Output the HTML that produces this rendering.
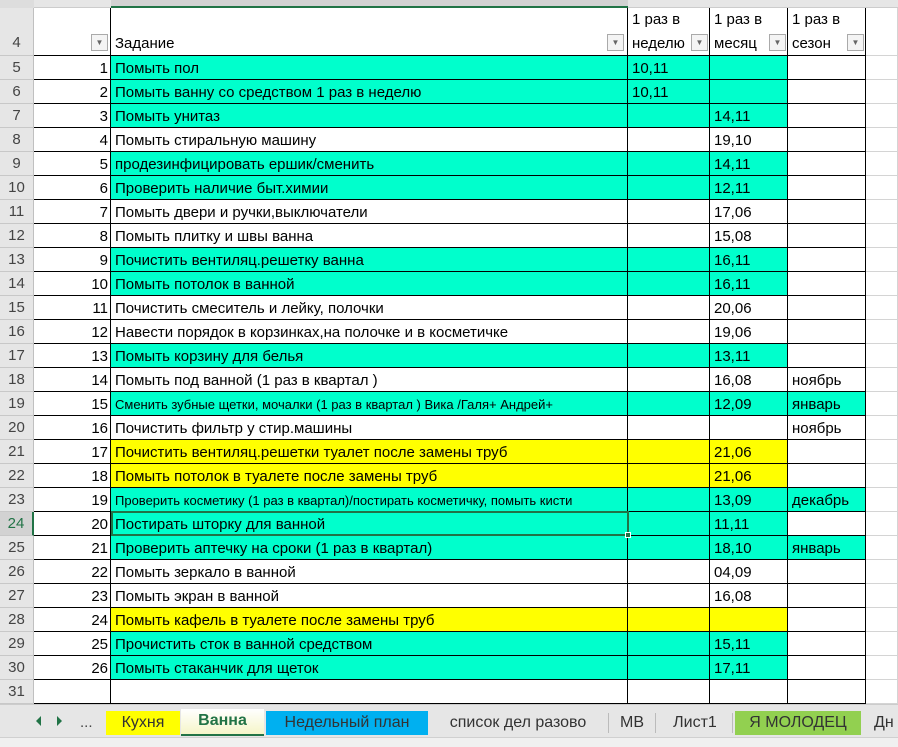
<!DOCTYPE html>
<html><head><meta charset="utf-8"><style>
*{margin:0;padding:0;box-sizing:border-box}
body{width:898px;height:747px;overflow:hidden;background:#fff;font-family:"Liberation Sans","DejaVu Sans",sans-serif;position:relative}
.a{position:absolute}
.rh{position:absolute;left:0;width:34px;background:#e6e6e6;color:#444;font-size:15px;text-align:center;border-bottom:1px solid #c8c8c8;border-right:1px solid #c0c0c0;white-space:nowrap;overflow:hidden}
.c{position:absolute;border-right:1px solid #000;border-bottom:1px solid #000;font-size:15px;color:#000;white-space:nowrap;overflow:hidden;line-height:25px;padding:0 4px}
.g{position:absolute;border-right:1px solid #d4d4d4;border-bottom:1px solid #d4d4d4}
.t{background:#00ffcc}.y{background:#ffff00}
.dd{position:absolute;width:17px;height:17px;border:1px solid #aaa;background:#f4f4f4;font-size:8px;color:#666;text-align:center;line-height:16px}
.tab{position:absolute;top:711px;height:24px;font-size:16px;line-height:24px;text-align:center;color:#333}
.sep{position:absolute;top:713px;width:1px;height:20px;background:#bbb}
</style></head><body>
<div class="a" style="left:0;top:0;width:898px;height:8px;background:#e6e6e6;border-bottom:1px solid #ccc"></div>
<div class="a" style="left:111px;top:0;width:517px;height:8px;background:#d2d2d2;border-bottom:2px solid #217346"></div>
<div class="a" style="left:0;top:0;width:34px;height:8px;background:#ddd"></div>
<div class="rh" style="top:8px;height:48px;line-height:70px">4</div>
<div class="c" style="left:34px;top:8px;width:77px;height:48px"></div>
<div class="dd" style="left:91px;top:34px">▼</div>
<div class="c" style="left:111px;top:8px;width:517px;height:48px;line-height:72px">Задание</div>
<div class="dd" style="left:607px;top:34px">▼</div>
<div class="c" style="left:628px;top:8px;width:82px;height:48px;line-height:24px">1 раз в<br>неделю</div>
<div class="dd" style="left:691px;top:34px">▼</div>
<div class="c" style="left:710px;top:8px;width:78px;height:48px;line-height:24px">1 раз в<br>месяц</div>
<div class="dd" style="left:769px;top:34px">▼</div>
<div class="c" style="left:788px;top:8px;width:78px;height:48px;line-height:24px">1 раз в<br>сезон</div>
<div class="dd" style="left:847px;top:34px">▼</div>
<div class="g" style="left:866px;top:8px;width:32px;height:48px"></div>
<div id="rows"></div>
<script>
(function(){
var d=[
[1,"Помыть пол","t","10,11","","",""],
[2,"Помыть ванну со средством 1 раз в неделю","t","10,11","","",""],
[3,"Помыть унитаз","t","","14,11","",""],
[4,"Помыть стиральную машину","","","19,10","",""],
[5,"продезинфицировать ершик/сменить","t","","14,11","",""],
[6,"Проверить наличие быт.химии","t","","12,11","",""],
[7,"Помыть двери и ручки,выключатели","","","17,06","",""],
[8,"Помыть плитку и швы ванна","","","15,08","",""],
[9,"Почистить вентиляц.решетку ванна","t","","16,11","",""],
[10,"Помыть потолок в ванной","t","","16,11","",""],
[11,"Почистить смеситель и лейку, полочки","","","20,06","",""],
[12,"Навести порядок в корзинках,на полочке и в косметичке","","","19,06","",""],
[13,"Помыть корзину для белья","t","","13,11","",""],
[14,"Помыть под ванной (1 раз в квартал )","","","16,08","ноябрь",""],
[15,"Сменить зубные щетки, мочалки (1 раз в квартал ) Вика /Галя+ Андрей+","t","","12,09","январь","t",1],
[16,"Почистить фильтр у стир.машины","","","","ноябрь",""],
[17,"Почистить вентиляц.решетки туалет после замены труб","y","","21,06","",""],
[18,"Помыть потолок в туалете после замены труб","y","","21,06","",""],
[19,"Проверить косметику (1 раз в квартал)/постирать косметичку, помыть кисти","t","","13,09","декабрь","t",1],
[20,"Постирать шторку для ванной","t","","11,11","",""],
[21,"Проверить аптечку на сроки (1 раз в квартал)","t","","18,10","январь","t"],
[22,"Помыть зеркало в ванной","","","04,09","",""],
[23,"Помыть экран в ванной","","","16,08","",""],
[24,"Помыть кафель в туалете после замены труб","y","","","",""],
[25,"Прочистить сток в ванной средством","t","","15,11","",""],
[26,"Помыть стаканчик для щеток","t","","17,11","",""]];
var h="";
for(var i=0;i<27;i++){
 var yy=56+i*24,r=d[i];
 var sel=(i==19);
 h+='<div class="rh" style="top:'+yy+'px;height:24px;line-height:24px;'+(sel?'background:#d2d2d2;color:#217346;border-right:2px solid #217346':'')+'">'+(i+5)+'</div>';
 if(!r){h+='<div class="c" style="left:34px;top:'+yy+'px;width:77px;height:24px"></div><div class="c" style="left:111px;top:'+yy+'px;width:517px;height:24px"></div><div class="c" style="left:628px;top:'+yy+'px;width:82px;height:24px"></div><div class="c" style="left:710px;top:'+yy+'px;width:78px;height:24px"></div><div class="c" style="left:788px;top:'+yy+'px;width:78px;height:24px"></div><div class="g" style="left:866px;top:'+yy+'px;width:32px;height:24px"></div>';continue;}
 var cl=r[2];
 h+='<div class="c" style="left:34px;top:'+yy+'px;width:77px;height:24px;text-align:right;padding-right:2px">'+r[0]+'</div>';
 h+='<div class="c '+cl+'" style="left:111px;top:'+yy+'px;width:517px;height:24px;'+(r[7]?'font-size:13px;':'')+'">'+r[1]+'</div>';
 h+='<div class="c '+cl+'" style="left:628px;top:'+yy+'px;width:82px;height:24px">'+r[3]+'</div>';
 h+='<div class="c '+cl+'" style="left:710px;top:'+yy+'px;width:78px;height:24px">'+r[4]+'</div>';
 h+='<div class="c '+r[6]+'" style="left:788px;top:'+yy+'px;width:78px;height:24px">'+r[5]+'</div>';
 h+='<div class="g" style="left:866px;top:'+yy+'px;width:32px;height:24px"></div>';
}
h+='<div class="a" style="left:111px;top:511px;width:518px;height:25px;border:2px solid #217346"></div><div class="a" style="left:625px;top:532px;width:6px;height:6px;background:#217346;border:1px solid #fff"></div>';
document.getElementById("rows").innerHTML=h;
})();
</script>
<div class="a" style="left:0;top:704px;width:898px;height:33px;background:#e6e6e6;border-top:1px solid #ccc"></div>
<div class="a" style="left:0;top:737px;width:898px;height:10px;background:#f0f0f0;border-top:1px solid #d0d0d0"></div>
<div class="a" style="left:36px;top:716px;width:0;height:0;border-top:5px solid transparent;border-bottom:5px solid transparent;border-right:5px solid #217346"></div>
<div class="a" style="left:57px;top:716px;width:0;height:0;border-top:5px solid transparent;border-bottom:5px solid transparent;border-left:5px solid #217346"></div>
<div class="a" style="left:80px;top:711px;font-size:15px;color:#444;line-height:24px">...</div>
<div class="tab" style="left:106px;width:74px;background:#ffff00">Кухня</div>
<div class="tab" style="left:181px;width:83px;background:linear-gradient(#fff,#f5f5c8);color:#217346;font-weight:bold;border-bottom:2px solid #217346;top:709px;height:27px">Ванна</div>
<div class="tab" style="left:266px;width:162px;background:#00b0f0">Недельный план</div>
<div class="tab" style="left:433px;width:170px">список дел разово</div>
<div class="sep" style="left:608px"></div>
<div class="tab" style="left:610px;width:44px">МВ</div>
<div class="sep" style="left:655px"></div>
<div class="tab" style="left:658px;width:74px">Лист1</div>
<div class="sep" style="left:732px"></div>
<div class="tab" style="left:735px;width:126px;background:#92d050">Я МОЛОДЕЦ</div>
<div class="tab" style="left:868px;width:40px;text-align:left;padding-left:6px">Дн</div>
</body></html>
